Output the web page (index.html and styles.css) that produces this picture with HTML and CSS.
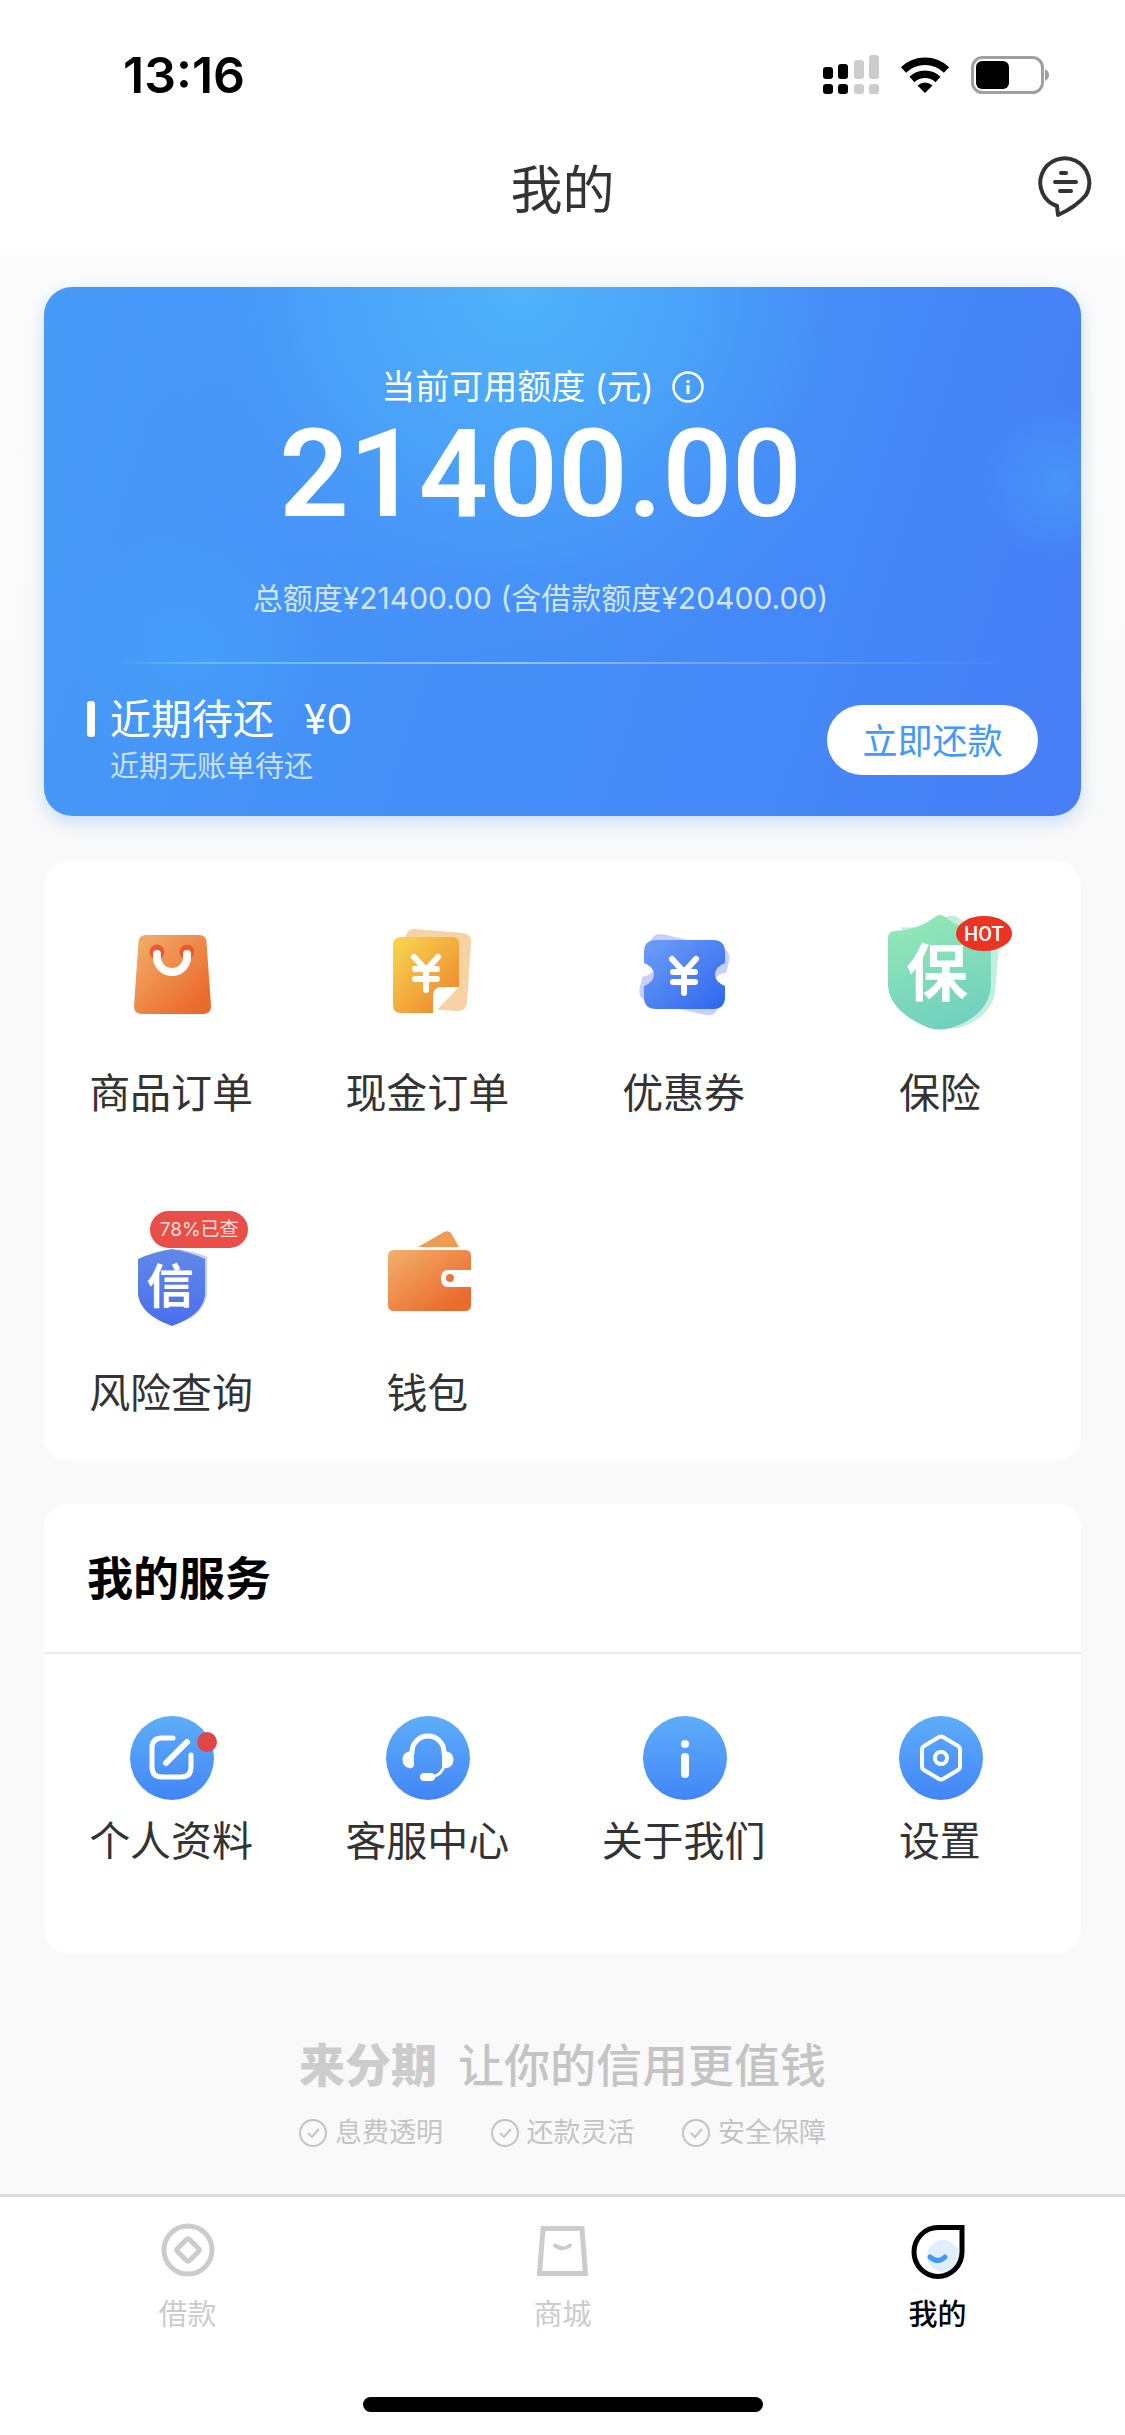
FILE: index.html
```html
<!DOCTYPE html>
<html lang="zh-CN">
  <head>
    <meta charset="UTF-8" />
    <meta name="viewport" content="width=device-width, initial-scale=1" />
    <title>我的</title>
    <link rel="stylesheet" href="styles.css">
  </head>
  <body>
    <header>
      <div class="status">
        <span class="time">13:16</span>
        <div class="status-icons">
          <svg width="56" height="40" viewBox="0 0 56 40">
            <g fill="#000">
              <rect x="0" y="12" width="10" height="12" rx="3" />
              <rect x="15" y="9" width="10" height="15" rx="3" />
              <rect x="0" y="29" width="10" height="10" rx="3" />
              <rect x="15" y="29" width="10" height="10" rx="3" />
            </g>
            <g fill="#ccc">
              <rect x="31" y="5" width="10" height="19" rx="3" />
              <rect x="46" y="0" width="10" height="24" rx="3" />
              <rect x="31" y="29" width="10" height="10" rx="3" />
              <rect x="46" y="29" width="10" height="10" rx="3" />
            </g>
          </svg>
          <svg width="50" height="38" viewBox="0 0 50 38">
            <path d="M3.5 14A31 31 0 0 1 46.500 14M12 23.500A19 19 0 0 1 38 23.500" fill="none" stroke="#000" stroke-width="7.500" />
            <path d="M25 37L17.500 29.500Q25 23.500 32.500 29.500Z" />
          </svg>
          <svg width="78" height="38" viewBox="0 0 78 38">
            <rect x="1.500" y="1.500" width="70" height="35" rx="10" fill="none" stroke="#a0a0a0" stroke-width="3" />
            <rect x="5" y="5" width="33" height="28" rx="6" />
            <path d="M74 13Q78 15 78 19T74 25Z" fill="#a0a0a0" />
          </svg>
        </div>
      </div>
      <div class="nav">
        <h1>我的</h1>
        <button type="button" class="message" aria-label="消息">
          <svg width="56" height="72" viewBox="0 0 56 72" fill="none" stroke="#333" stroke-width="4" stroke-linecap="round" stroke-linejoin="round">
            <path d="M20 51A24.500 24.500 0 1 1 49 40Q39 52 21 60Z" />
            <path d="M24 18H29M18 27H39M23 36H34" />
          </svg>
        </button>
      </div>
    </header>

    <main>
      <section class="credit">
        <div class="credit-title">
          <span>当前可用额度 (元)</span>
          <svg width="32" height="32" viewBox="0 0 32 32" fill="none" stroke="#fff">
            <circle cx="16" cy="16" r="14.500" stroke-width="2.500" />
            <path d="M16 14V23" stroke-width="3" />
            <path d="M16 9V12" stroke-width="3" />
          </svg>
        </div>
        <div class="amount">21400.00</div>
        <div class="total">总额度¥21400.00 (含借款额度¥20400.00)</div>
        <div class="line"></div>
        <div class="repay">
          <div class="repay-info">
            <div class="repay-title"><span>近期待还</span><span>¥0</span></div>
            <p>近期无账单待还</p>
          </div>
          <button type="button" class="repay-btn">立即还款</button>
        </div>
      </section>

      <section class="card grid menu">
        <a href="#" class="item">
          <span class="icon">
            <svg width="120" height="120" viewBox="0 0 120 120">
              <defs>
                <linearGradient id="orange" x1="0" y1="0" x2="1" y2="1">
                  <stop offset="0" stop-color="#f2b06c" />
                  <stop offset="0.850" stop-color="#eb6b2d" />
                </linearGradient>
              </defs>
              <path d="M34 22H87Q94 22 94.500 29L99 93Q99 101 91 101H30Q22 101 22 93L26.500 29Q27 22 34 22Z" fill="url(#orange)" />
              <circle cx="45" cy="39" r="7.500" fill="#ee5a2f" />
              <circle cx="75" cy="39" r="7.500" fill="#ee5a2f" />
              <path d="M45 41V44A15 15 0 0 0 75 44V41" fill="none" stroke="#fff" stroke-width="8" stroke-linecap="round" />
            </svg>
          </span>
          <span class="label">商品订单</span>
        </a>
        <a href="#" class="item">
          <span class="icon">
            <svg width="120" height="120" viewBox="0 0 120 120">
              <defs>
                <linearGradient id="yellow" x1="0" y1="0" x2="1" y2="1">
                  <stop offset="0" stop-color="#f8d850" />
                  <stop offset="0.800" stop-color="#ee9233" />
                </linearGradient>
              </defs>
              <path d="M46 16L95 20Q104 21 103 30L99 90Q98 98 89 98L62 96L36 30Q38 16 46 16Z" fill="#f7d3a3" />
              <path d="M33 24H84Q91 24 91 31V74L65 100H33Q25 100 25 92V32Q25 24 33 24Z" fill="url(#yellow)" />
              <path d="M65 100V83Q65 74 74 74H91L67 99Z" fill="#fff" />
              <path d="M46 44L58 57L70 44M58 57V77M47 56H69M47 66H69" fill="none" stroke="#fff" stroke-width="6" stroke-linecap="round" />
            </svg>
          </span>
          <span class="label">现金订单</span>
        </a>
        <a href="#" class="item">
          <span class="icon">
            <svg width="120" height="120" viewBox="0 0 120 120">
              <defs>
                <linearGradient id="blue" x1="0" y1="0" x2="1" y2="1">
                  <stop offset="0" stop-color="#6f9ef8" />
                  <stop offset="1" stop-color="#2d66ee" />
                </linearGradient>
                <path id="ticket" d="M31 27H88Q100 27 100 39V50Q90 54 90 61.500T100 73V84Q100 96 88 96H31Q19 96 19 84V73Q29 69 29 61.500T19 50V39Q19 27 31 27Z" />
              </defs>
              <use href="#ticket" fill="#c9cffa" transform="rotate(13 59 61)" />
              <use href="#ticket" fill="url(#blue)" />
              <path d="M47 46L59 59L71 46M59 59V80M48 59H70M48 69H70" fill="none" stroke="#fff" stroke-width="6" stroke-linecap="round" />
            </svg>
          </span>
          <span class="label">优惠券</span>
        </a>
        <a href="#" class="item">
          <span class="icon">
            <svg width="120" height="120" viewBox="0 0 120 120">
              <defs>
                <linearGradient id="green" x1="0.300" y1="0" x2="0.600" y2="1">
                  <stop offset="0" stop-color="#92e8b5" />
                  <stop offset="1" stop-color="#70cfc0" />
                </linearGradient>
              </defs>
              <path d="M20 14Q42 17 62 5Q72 0 79 6Q98 20 119 20L114 80Q110 104 78 115H59Z" fill="#c3eedb" />
              <path d="M54 4Q59 0 64 4Q82 18 104 18Q110 18 110 25V73Q108 102 70 115Q59 118 48 115Q9 99 7 73V25Q7 18 14 18Q37 17 54 4Z" fill="url(#green)" />
              <text x="56" y="83" class="glyph glyph-lg">保</text>
            </svg>
            <span class="hot">HOT</span>
          </span>
          <span class="label">保险</span>
        </a>
        <a href="#" class="item">
          <span class="icon">
            <svg width="120" height="120" viewBox="0 0 120 120">
              <defs>
                <linearGradient id="indigo" x1="0" y1="0" x2="0" y2="1">
                  <stop offset="0" stop-color="#6189e6" />
                  <stop offset="1" stop-color="#4a6eee" />
                </linearGradient>
              </defs>
              <path d="M66 36Q84 39 95 44V82Q90 104 66 110Z" fill="#c0cdf6" />
              <path d="M60 36Q78 39 93 46V82Q91 102 60 113Q29 102 26 82V46Q41 39 60 36Z" fill="url(#indigo)" />
              <text x="58" y="90" class="glyph glyph-sm">信</text>
            </svg>
            <span class="checked">78%已查</span>
          </span>
          <span class="label">风险查询</span>
        </a>
        <a href="#" class="item">
          <span class="icon">
            <svg width="120" height="120" viewBox="0 0 120 120">
              <path d="M50 34L76 19Q80 17 83 20L91 34Z" fill="#f09a52" />
              <path d="M26 37H97Q103 37 103 43V57H80Q73 57 73 65.500T80 74H103V92Q103 98 97 98H26Q20 98 20 92V43Q20 37 26 37Z" fill="url(#orange)" />
              <circle cx="82" cy="65" r="4" fill="#ec7733" />
            </svg>
          </span>
          <span class="label">钱包</span>
        </a>
      </section>

      <section class="card">
        <h2>我的服务</h2>
        <div class="grid services">
          <a href="#" class="item">
            <span class="icon">
              <svg width="84" height="84" viewBox="0 0 84 84" fill="none" stroke="#fff" stroke-linecap="round">
                <path d="M43 22H32Q22 22 22 32V51Q22 61 32 61H51Q61 61 61 51V39" stroke-width="5" />
                <path d="M36 47L57 26" stroke-width="6" />
              </svg>
              <span class="dot"></span>
            </span>
            <span class="label">个人资料</span>
          </a>
          <a href="#" class="item">
            <span class="icon">
              <svg width="84" height="84" viewBox="0 0 84 84">
                <path d="M26 38V36A16 16 0 0 1 58 36V38" fill="none" stroke="#fff" stroke-width="5" />
                <path d="M28 35V49Q27 53 23 52A8.500 8.500 0 0 1 23 35.500ZM56 35V49Q57 53 61 52A8.500 8.500 0 0 0 61 35.500Z" fill="#fff" />
                <path d="M58 50Q56 58 47 61" fill="none" stroke="#fff" stroke-width="3" />
                <rect x="34" y="57" width="15" height="8" rx="4" fill="#fff" />
              </svg>
            </span>
            <span class="label">客服中心</span>
          </a>
          <a href="#" class="item">
            <span class="icon">
              <svg width="84" height="84" viewBox="0 0 84 84" fill="#fff">
                <circle cx="42" cy="28" r="4" />
                <rect x="38" y="37" width="8" height="25" rx="4" />
              </svg>
            </span>
            <span class="label">关于我们</span>
          </a>
          <a href="#" class="item">
            <span class="icon">
              <svg width="84" height="84" viewBox="0 0 84 84" fill="none" stroke="#fff" stroke-width="4">
                <path d="M40 21Q42 20 44 21L59 30Q61 31 61 34V50Q61 53 59 54L44 63Q42 64 40 63L25 54Q23 53 23 50V34Q23 31 25 30Z" />
                <circle cx="42" cy="42" r="6" />
              </svg>
            </span>
            <span class="label">设置</span>
          </a>
        </div>
      </section>

      <div class="brand">
        <div class="slogan"><strong>来分期</strong><span>让你的信用更值钱</span></div>
        <ul>
          <li><svg width="28" height="28" viewBox="0 0 28 28"><circle cx="14" cy="14" r="13" /><path d="M9 14L13 18L20 10" /></svg>息费透明</li>
          <li><svg width="28" height="28" viewBox="0 0 28 28"><circle cx="14" cy="14" r="13" /><path d="M9 14L13 18L20 10" /></svg>还款灵活</li>
          <li><svg width="28" height="28" viewBox="0 0 28 28"><circle cx="14" cy="14" r="13" /><path d="M9 14L13 18L20 10" /></svg>安全保障</li>
        </ul>
      </div>
    </main>

    <footer>
      <nav class="tabs">
        <a href="#">
          <svg width="54" height="56" viewBox="0 0 54 56" fill="none" stroke="#ccc" stroke-width="5">
            <circle cx="27" cy="27" r="24" />
            <rect x="18.500" y="18.500" width="17" height="17" rx="2" transform="rotate(45 27 27)" />
          </svg>
          <span>借款</span>
        </a>
        <a href="#">
          <svg width="54" height="56" viewBox="0 0 54 56" fill="none" stroke="#ccc" stroke-width="5">
            <path d="M7 5.500H46L49.500 50.500H3.500Z" />
            <path d="M19 22.500Q27 28 34 22.500" stroke-width="4" stroke-linecap="round" />
          </svg>
          <span>商城</span>
        </a>
        <a href="#" class="active">
          <svg width="54" height="56" viewBox="0 0 54 56" fill="none">
            <circle cx="32" cy="33" r="16" fill="#e1effd" />
            <path d="M27 4.500H51V29A24 24.500 0 1 1 27 4.500Z" stroke="#000" stroke-width="5" />
            <path d="M19 34Q27 41 34 34" stroke="#4397f7" stroke-width="5" stroke-linecap="round" />
          </svg>
          <span>我的</span>
        </a>
      </nav>
      <div class="home-bar"></div>
    </footer>
  </body>
</html>
```
FILE: styles.css
```css
* {
  box-sizing: border-box;
}

body {
  margin: 0;
  min-height: 100vh;
  display: flex;
  flex-direction: column;
  font-family: Inter, "Noto Sans CJK SC", sans-serif;
  font-size: 41px;
  color: #333;
  background-color: #f9f9f9;
}

h1, h2, p, ul {
  margin: 0;
  padding: 0;
}

a {
  color: inherit;
  text-decoration: none;
}

svg {
  display: block;
  flex: none;
}

button {
  border: none;
  padding: 0;
  font-family: inherit;
  cursor: pointer;
}

/* Header */
header {
  padding-bottom: 22px;
  background-color: #fff;
}

.status {
  height: 150px;
  padding: 0 76px 0 123px;
  display: flex;
  align-items: center;
  justify-content: space-between;
}

.time {
  font-size: 50px;
  font-weight: 600;
  color: #000;
}

.status-icons {
  display: flex;
  align-items: center;
  gap: 21px;
}

.nav {
  height: 82px;
  padding: 0 32px;
  display: grid;
  grid-template-columns: 1fr auto 1fr;
  align-items: center;
}

.nav h1 {
  grid-column: 2;
  font-size: 52px;
  font-weight: 400;
  line-height: 82px;
}

.message {
  justify-self: end;
  background: none;
}

main {
  flex: 1;
  padding: 33px 44px 41px;
  background: linear-gradient(#fcfcfc, #f9f9f9 600px);
}

/* Credit card */
.credit {
  padding: 72px 43px 28px;
  border-radius: 28px;
  color: #fff;
  background:
    radial-gradient(circle at 46% 0, #52b8fbe6 0, #4ca9f9b3 180px, #4a9bf84d 300px, #4a9bf800 390px),
    radial-gradient(circle at 14% 68%, #48a5fb99 0, #48a0fa00 130px),
    radial-gradient(circle at 98% 37%, #4898f8cc 0, #4892f700 80px),
    linear-gradient(107deg, #479af8 0%, #448ff7 45%, #4586f7 80%, #487df7 100%);
  box-shadow: 0 6px 18px #a9c9f099;
}

.credit-title {
  display: flex;
  align-items: center;
  justify-content: center;
  gap: 18px;
  padding-right: 40px;
  font-size: 34px;
  line-height: 56px;
}

.amount {
  padding-right: 44px;
  text-align: center;
  font-family: Roboto, sans-serif;
  font-size: 122px;
  font-weight: 600;
  line-height: 120px;
}

.total {
  padding: 43px 44px 0 0;
  text-align: center;
  font-size: 30px;
  line-height: 40px;
  color: #d0e4fd;
}

.line {
  height: 2px;
  margin: 44px 28px;
  margin-bottom: 28px;
  background: linear-gradient(90deg, #5ebcfb00, #5ebcfb 10%, #8fc8fb 45%, #6fa6fa 65%, #6fa6fa00);
}

.repay {
  display: flex;
  align-items: center;
  justify-content: space-between;
}

.repay-title {
  display: flex;
  align-items: center;
  line-height: 54px;
}

.repay-title::before {
  content: "";
  width: 8px;
  height: 36px;
  margin-right: 15px;
  border-radius: 3px;
  background-color: #fff;
}

.repay-title span + span {
  margin-left: 30px;
}

.repay-info p {
  padding-left: 23px;
  font-size: 29px;
  line-height: 42px;
  color: #c8e0fd;
}

.repay-btn {
  width: 211px;
  height: 70px;
  padding-bottom: 4px;
  border-radius: 35px;
  font-size: 35px;
  color: #4299f8;
  background-color: #fff;
}

/* White cards */
.card {
  border-radius: 24px;
  background-color: #fff;
}

.menu {
  margin: 45px 0 43px;
}

.grid {
  display: grid;
  grid-template-columns: repeat(4, 1fr);
  padding-right: 12px;
}

.item {
  display: flex;
  flex-direction: column;
  align-items: center;
  padding: 52px 0 38px;
}

.icon {
  position: relative;
  margin-bottom: 30px;
}

.label {
  padding-right: 2px;
  line-height: 60px;
}

.glyph {
  fill: #fff;
  font-weight: 700;
  text-anchor: middle;
}

.glyph-lg {
  font-size: 62px;
}

.glyph-sm {
  font-size: 47px;
}

.hot {
  position: absolute;
  top: 3px;
  right: -11px;
  width: 56px;
  height: 35px;
  border-radius: 50%;
  text-align: center;
  font-family: Roboto, sans-serif;
  font-size: 20px;
  font-weight: 500;
  line-height: 36px;
  color: #fff;
  background-color: #e93323;
}

.checked {
  position: absolute;
  top: -2px;
  left: 38px;
  width: 98px;
  height: 37px;
  border-radius: 19px;
  text-align: center;
  font-size: 19px;
  line-height: 37px;
  color: #fde0dc;
  background-color: #e94e48;
}

h2 {
  height: 150px;
  padding-left: 43px;
  border-bottom: 2px solid #ebebeb;
  font-size: 46px;
  font-weight: 700;
  line-height: 148px;
  color: #000;
}

.services .item {
  padding: 62px 0 82px;
}

.services .icon {
  margin-bottom: 11px;
  border-radius: 50%;
  background: linear-gradient(#5eadfa, #4286f7);
}

.dot {
  position: absolute;
  top: 16px;
  right: -3px;
  width: 20px;
  height: 20px;
  border-radius: 50%;
  background-color: #e04648;
}

/* Slogan */
.brand {
  width: 527px;
  margin: 80px auto 0;
  color: #c4c4c4;
}

.slogan {
  display: flex;
  justify-content: space-between;
  font-size: 46px;
  font-weight: 500;
  line-height: 64px;
}

.slogan strong {
  font-weight: 900;
  color: #ccc;
}

.brand ul {
  display: flex;
  justify-content: space-between;
  margin-top: 16px;
  list-style: none;
  font-size: 27px;
  line-height: 40px;
}

.brand li {
  display: flex;
  align-items: center;
  gap: 8px;
}

.brand li svg {
  fill: none;
  stroke: #c4c4c4;
  stroke-width: 2px;
}

/* Tab bar */
footer {
  padding-bottom: 23px;
  border-top: 3px solid #dcdcdc;
  background-color: #fff;
}

.tabs {
  display: grid;
  grid-template-columns: repeat(3, 1fr);
  padding: 26px 0 62px;
}

.tabs a {
  display: flex;
  flex-direction: column;
  align-items: center;
  gap: 16px;
  font-size: 29px;
  line-height: 40px;
  color: #ccc;
}

.tabs .active {
  font-weight: 500;
  color: #000;
}

.home-bar {
  width: 400px;
  height: 15px;
  margin: 0 auto;
  border-radius: 8px;
  background-color: #000;
}
```
